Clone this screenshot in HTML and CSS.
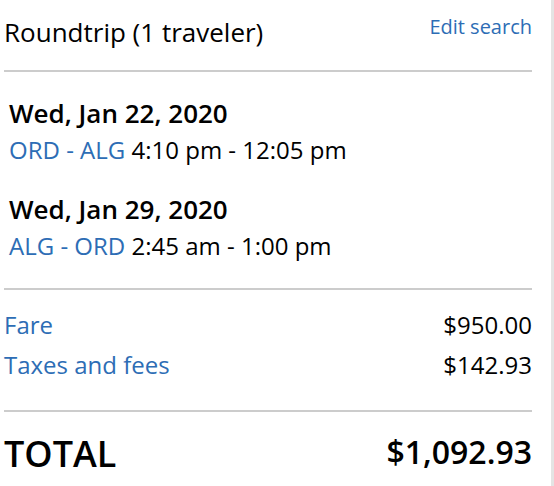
FILE: index.html
```html
<!DOCTYPE html>
<html>
<head>
<meta charset="utf-8">
<link rel="stylesheet" href="styles.css">
</head>
<body>
<div class="panel">
  <div class="header">
    <div class="title">Roundtrip (1 traveler)</div>
    <a class="edit">Edit search</a>
  </div>
  <div class="trips">
    <div class="trip">
      <div class="date">Wed, Jan 22, 2020</div>
      <div class="route"><span class="link">ORD - ALG</span> 4:10 pm - 12:05 pm</div>
    </div>
    <div class="trip">
      <div class="date">Wed, Jan 29, 2020</div>
      <div class="route"><span class="link">ALG - ORD</span> 2:45 am - 1:00 pm</div>
    </div>
  </div>
  <div class="costs">
    <div class="row"><span class="link">Fare</span><span>$950.00</span></div>
    <div class="row"><span class="link">Taxes and fees</span><span>$142.93</span></div>
  </div>
  <div class="total">
    <span class="total-label">TOTAL</span><span class="total-amount">$1,092.93</span>
  </div>
</div>
</body>
</html>
```
FILE: styles.css
```css
html, body {
  margin: 0;
  padding: 0;
  background: #fff;
}
body {
  font-family: "Open Sans", "DejaVu Sans", sans-serif;
  color: #000;
  width: 554px;
  height: 486px;
  overflow: hidden;
}
.panel {
  width: 528px;
  height: 486px;
  padding-left: 4px;
  padding-right: 19px;
  border-right: 3px solid #e4e4e4;
}
.link {
  color: #2d6db5;
}
.header {
  display: flex;
  justify-content: space-between;
  align-items: flex-start;
  height: 70px;
  border-bottom: 2px solid #cccccc;
}
.title {
  font-size: 26px;
  line-height: 32px;
  margin-top: 16px;
}
.edit {
  font-size: 20px;
  line-height: 28px;
  margin-top: 13px;
  color: #2d6db5;
}
.trips {
  display: flex;
  flex-direction: column;
  gap: 24px;
  padding: 24px 0 24px 5px;
  border-bottom: 2px solid #cccccc;
}
.date {
  font-weight: 600;
  font-size: 26px;
  line-height: 34px;
}
.route {
  font-size: 24px;
  line-height: 36px;
  margin-top: 2px;
}
.costs {
  padding: 15px 0 25px 0;
  border-bottom: 2px solid #cccccc;
}
.row {
  display: flex;
  justify-content: space-between;
  font-size: 24px;
  line-height: 40px;
}
.total {
  display: flex;
  justify-content: space-between;
  align-items: center;
  font-weight: 600;
  padding-top: 16px;
  height: 48px;
}
.total-label {
  font-size: 36px;
  line-height: 48px;
  margin-top: 4px;
}
.total-amount {
  font-size: 32px;
  line-height: 48px;
}
```
